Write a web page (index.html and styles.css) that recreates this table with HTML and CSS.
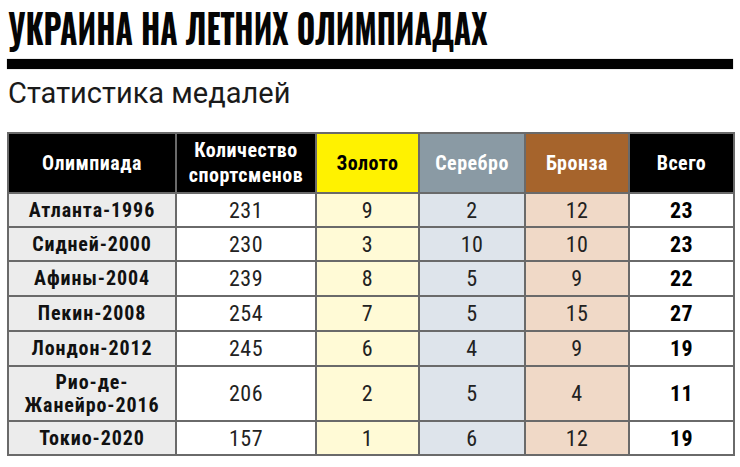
FILE: index.html
```html
<!DOCTYPE html>
<html lang="ru"><head><meta charset="utf-8"><link rel="stylesheet" href="styles.css"></head>
<body>
<div class="page">
  <h1 class="title"><span class="title-text">УКРАИНА НА ЛЕТНИХ ОЛИМПИАДАХ</span></h1>
  <div class="rule"></div>
  <h2 class="subtitle">Статистика медалей</h2>
  <table class="stats">
    <colgroup>
      <col class="c1"><col class="c2"><col class="c3"><col class="c4"><col class="c5"><col class="c6">
    </colgroup>
    <thead>
      <tr>
        <th class="h-dark">Олимпиада</th>
        <th class="h-dark">Количество<br>спортсменов</th>
        <th class="h-gold">Золото</th>
        <th class="h-silver">Серебро</th>
        <th class="h-bronze">Бронза</th>
        <th class="h-dark">Всего</th>
      </tr>
    </thead>
    <tbody>
      <tr><td class="name">Атланта-1996</td><td>231</td><td class="gold">9</td><td class="silver">2</td><td class="bronze">12</td><td class="total">23</td></tr>
      <tr><td class="name">Сидней-2000</td><td>230</td><td class="gold">3</td><td class="silver">10</td><td class="bronze">10</td><td class="total">23</td></tr>
      <tr class="tall1"><td class="name">Афины-2004</td><td>239</td><td class="gold">8</td><td class="silver">5</td><td class="bronze">9</td><td class="total">22</td></tr>
      <tr class="tall1"><td class="name">Пекин-2008</td><td>254</td><td class="gold">7</td><td class="silver">5</td><td class="bronze">15</td><td class="total">27</td></tr>
      <tr class="tall1"><td class="name">Лондон-2012</td><td>245</td><td class="gold">6</td><td class="silver">4</td><td class="bronze">9</td><td class="total">19</td></tr>
      <tr class="double"><td class="name">Рио-де-<br>Жанейро-2016</td><td>206</td><td class="gold">2</td><td class="silver">5</td><td class="bronze">4</td><td class="total">11</td></tr>
      <tr><td class="name">Токио-2020</td><td>157</td><td class="gold">1</td><td class="silver">6</td><td class="bronze">12</td><td class="total">19</td></tr>
    </tbody>
  </table>
</div>
</body></html>
```
FILE: styles.css
```css
html,body{margin:0;padding:0;background:#fff;}
.page{padding:0 7px 0 7px;width:726px;}
.title{
  margin:0;
  padding:2px 0 0 1px;
  font-family:"Oswald","Roboto Condensed",sans-serif;
  font-weight:700;
  font-size:40.5px;
  line-height:50px;
  color:#050505;
  white-space:nowrap;
  height:50px;
}
.title-text{
  display:inline-block;
  transform:scaleX(0.78);
  transform-origin:0 50%;
}
.rule{
  margin-top:7px;
  height:10px;
  background:#000;
  box-shadow:0 0 1px #888;
}
.subtitle{
  margin:8px 0 0 1px;
  font-family:Roboto,sans-serif;
  font-weight:400;
  font-size:29px;
  line-height:33px;
  color:#1a1a1a;
}
.stats{
  margin-top:22px;
  width:726px;
  table-layout:fixed;
  border-collapse:collapse;
  font-family:"Roboto Condensed",Roboto,sans-serif;
}
.c1{width:168px}.c2{width:140px}.c3{width:103px}.c4{width:106px}.c5{width:104px}.c6{width:105px}
.stats th,.stats td{
  border:2px solid #6a6a6a;
  text-align:center;
  vertical-align:middle;
  padding:0;
}
.stats th{
  height:58px;
  font-weight:700;
  font-size:20px;
  line-height:25px;
  color:#fff;
  letter-spacing:0.5px;
}
.h-dark{background:#000;}
.h-gold{background:#fff200;color:#000 !important;}
.h-silver{background:#8a9aa4;}
.h-bronze{background:#a6642c;}
.stats td{
  height:32px;
  font-size:22px;
  line-height:23px;
  color:#222;
  background:#fff;
  letter-spacing:0.5px;
}
.stats tr.tall1 td{height:33px;}
.stats tr.double td{height:53px;}
.stats td.name{background:#ececec;font-weight:700;font-size:20px;color:#111;letter-spacing:0.9px;}
.stats td.gold{background:#fffad6;}
.stats td.silver{background:#dee4eb;}
.stats td.bronze{background:#f0d9c7;}
.stats td.total{font-weight:700;color:#000;}
```
